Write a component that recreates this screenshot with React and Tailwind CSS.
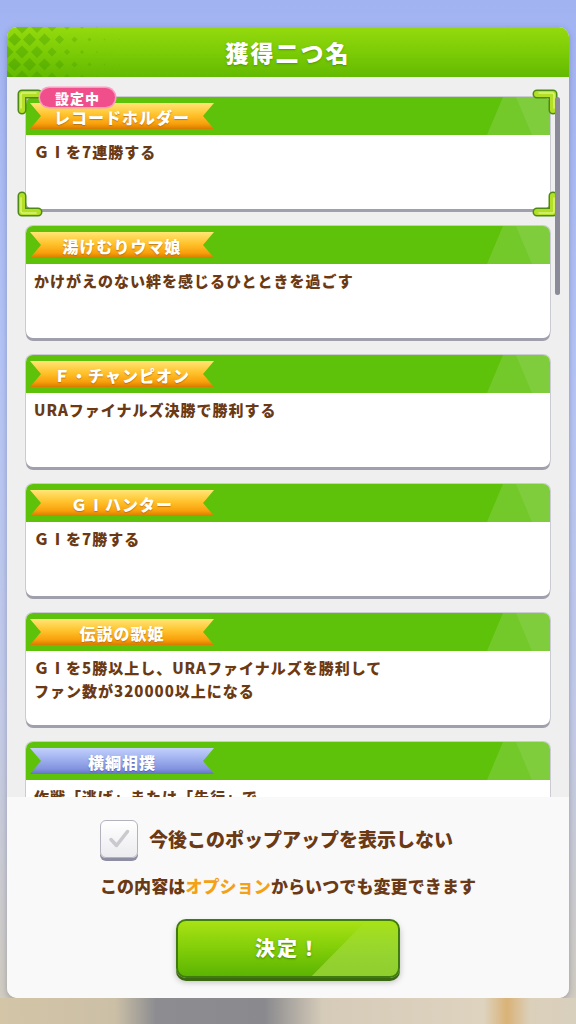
import React from 'react';

const titles = [
  { name: 'レコードホルダー', desc: 'ＧⅠを7連勝する', active: true },
  { name: '湯けむりウマ娘', desc: 'かけがえのない絆を感じるひとときを過ごす' },
  { name: 'Ｆ・チャンピオン', desc: 'URAファイナルズ決勝で勝利する' },
  { name: 'ＧⅠハンター', desc: 'ＧⅠを7勝する' },
  { name: '伝説の歌姫', desc: 'ＧⅠを5勝以上し、URAファイナルズを勝利して\nファン数が320000以上になる' },
  { name: '横綱相撲', desc: '作戦「逃げ」または「先行」で', tone: 'blue' },
];

// diamond lattice in the top-left of the header, fading out to the right
const HeaderPattern = () => {
  const sizes = [7.5, 7.5, 7, 5.5, 4, 3, 2, 1.5];
  const shapes = [];
  sizes.forEach((r, col) => {
    for (let row = 0; row < 5; row++) {
      const cx = col * 15 + (row % 2 ? 7.5 : 0);
      const cy = row * 12.5;
      shapes.push(
        <polygon
          key={`${col}-${row}`}
          points={`${cx},${cy - r + 1} ${cx + r - 1},${cy} ${cx},${cy + r - 1} ${cx - r + 1},${cy}`}
          fill="#3c9500"
          opacity={0.38 - col * 0.03}
        />
      );
    }
  });
  return (
    <svg className="absolute left-0 top-0 h-[50px] w-[130px]" viewBox="0 0 130 50">
      {shapes}
    </svg>
  );
};

const Bracket = ({ className }) => (
  <svg className={`absolute h-[26px] w-[26px] ${className}`} viewBox="0 0 26 26">
    <path d="M5 21V5H21" fill="none" stroke="#4d8a14" strokeWidth="9" strokeLinecap="round" strokeLinejoin="round" />
    <path d="M5 21V5H21" fill="none" stroke="#b3df26" strokeWidth="6" strokeLinecap="round" strokeLinejoin="round" />
    <path d="M4 19V5.5a1.5 1.5 0 0 1 1.5-1.5H19" fill="none" stroke="#dcf57a" strokeWidth="1.5" strokeLinecap="round" />
  </svg>
);

const Ribbon = ({ name, tone }) => {
  const fill =
    tone === 'blue'
      ? 'bg-[linear-gradient(180deg,#c3d0fb_0%,#9eafee_45%,#8393de_80%,#6474c4_100%)] [text-shadow:0_1px_1px_rgba(60,70,150,0.6)]'
      : 'bg-[linear-gradient(180deg,#ffe676_0%,#ffc22c_45%,#f8a00c_80%,#d97a00_100%)] [text-shadow:0_1px_1px_rgba(170,90,0,0.65)]';
  return (
    <div
      className={`flex h-[26px] w-[184px] items-center justify-center pt-[1px] text-[16px] font-black tracking-[1px] text-white [clip-path:polygon(0_0,100%_0,calc(100%_-_11px)_50%,100%_100%,0_100%,11px_50%)] ${fill}`}
    >
      {name}
    </div>
  );
};

const TitleCard = ({ name, desc, tone, active }) => (
  <div className="relative h-[112px] shrink-0 rounded-[7px] bg-white shadow-[0_3px_0_#a0a0ac,0_0_0_1px_#cbcbd3]">
    <div className="relative flex h-[38px] items-center overflow-hidden rounded-t-[7px] bg-[#5fc20a] pl-[4px]">
      <svg className="absolute right-0 top-0 h-[38px] w-[90px]" viewBox="0 0 90 38">
        <polygon points="43,0 90,0 90,38 27,38" fill="#ffffff" opacity="0.13" />
        <polygon points="56,0 90,0 90,38 72,38" fill="#ffffff" opacity="0.09" />
      </svg>
      <Ribbon name={name} tone={tone} />
    </div>
    <p className="whitespace-pre-line px-[8px] pt-[5px] text-[15px] font-black leading-[23px] tracking-[1px] text-[#6b3a14]">
      {desc}
    </p>
    {active && (
      <>
        <Bracket className="-left-[9px] -top-[8px]" />
        <Bracket className="-right-[8px] -top-[8px] -scale-x-100" />
        <Bracket className="-bottom-[8px] -left-[9px] -scale-y-100" />
        <Bracket className="-bottom-[8px] -right-[8px] rotate-180" />
        <span className="absolute -top-[9px] left-[14px] flex h-[19px] w-[75px] items-center justify-center rounded-full bg-[#f04f8c] text-[14px] font-black leading-none tracking-[1px] text-white shadow-[0_0_0_1.5px_#ff9cc0]">
          設定中
        </span>
      </>
    )}
  </div>
);

export default function App() {
  return (
    <div className="flex h-[1024px] w-[576px] flex-col overflow-hidden bg-[linear-gradient(180deg,#a2b3f2_0%,#b5c4f6_35%,#c4cbe8_70%,#d2cbbd_100%)] px-[7px] pt-[27px] [font-family:'Noto_Sans_CJK_JP','Noto_Sans',sans-serif]">
      <div className="flex h-[971px] shrink-0 flex-col overflow-hidden rounded-[10px] bg-[#f0f0f0] shadow-[0_2px_6px_rgba(40,50,90,0.3)]">
        {/* header */}
        <div className="relative flex h-[50px] shrink-0 items-center justify-center bg-[linear-gradient(180deg,#95d90e_0%,#7ccc06_50%,#63ba02_100%)] shadow-[0_1px_0_#a5dc4a]">
          <HeaderPattern />
          <h1 className="relative text-[23px] font-black tracking-[2px] text-white [text-shadow:0_1px_2px_rgba(50,100,0,0.5)]">
            獲得二つ名
          </h1>
        </div>

        {/* list */}
        <div className="relative flex h-[720px] shrink-0 flex-col gap-[17px] overflow-hidden bg-[#efeff0] px-[19px] pt-[20px]">
          {titles.map((t) => (
            <TitleCard key={t.name} {...t} />
          ))}
          <div className="absolute right-[9px] top-[20px] h-[198px] w-[5px] rounded-full bg-[#8a8a98]" />
        </div>

        {/* footer */}
        <div className="flex flex-1 flex-col items-center bg-[#f9f9f9] pt-[23px]">
          <div className="flex flex-col items-start">
            <label className="flex items-center gap-[11px]">
              <span className="flex h-[38px] w-[38px] items-center justify-center rounded-[6px] border border-[#b3b3bd] bg-[linear-gradient(180deg,#ffffff_0%,#ececf0_100%)] shadow-[0_3px_0_#8e8ea2]">
                <svg className="h-[26px] w-[26px]" viewBox="0 0 26 26">
                  <path d="M5 13.5l5.5 6L21.5 5.5" fill="none" stroke="#c9c9ce" strokeWidth="3.5" strokeLinecap="round" strokeLinejoin="round" />
                </svg>
              </span>
              <span className="text-[19px] font-black text-[#6b3a14]">今後このポップアップを表示しない</span>
            </label>
            <p className="mt-[15px] text-[17px] font-black tracking-[0.1px] text-[#6b3a14]">
              この内容は<span className="text-[#f5a116]">オプション</span>からいつでも変更できます
            </p>
          </div>

          <button className="relative mt-[20px] flex h-[59px] w-[224px] items-center justify-center overflow-hidden rounded-[10px] border-2 border-[#3f7b0e] bg-[linear-gradient(180deg,#a8e214_0%,#86d00a_45%,#5cb402_100%)] shadow-[0_3px_0_#3a6a10,0_4px_6px_rgba(0,0,0,0.25)]">
            <svg className="absolute right-0 top-0 h-[59px] w-[90px]" viewBox="0 0 90 59" preserveAspectRatio="none">
              <defs>
                <linearGradient id="btnFacet" x1="0" y1="0" x2="0" y2="1">
                  <stop offset="0" stopColor="#ffffff" stopOpacity="0" />
                  <stop offset="1" stopColor="#d4f25a" stopOpacity="0.45" />
                </linearGradient>
              </defs>
              <polygon points="58,0 90,0 90,59 0,59" fill="url(#btnFacet)" />
            </svg>
            <span className="relative text-[20px] font-black tracking-[2px] text-white [text-shadow:0_1px_2px_rgba(40,90,0,0.6)]">
              決定！
            </span>
          </button>
        </div>
      </div>
      <div className="-mx-[7px] flex-1 bg-[linear-gradient(90deg,#d3c5a6_0%,#cbbfa6_20%,#8d8d91_27%,#8a8a8e_46%,#d5cbb8_56%,#ddd3bf_84%,#d9b277_88%,#dbd0ba_92%,#d8cfbd_100%)]" />
    </div>
  );
}
